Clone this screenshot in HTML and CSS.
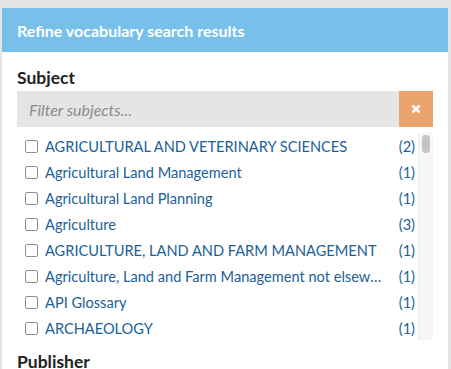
FILE: index.html
```html
<!DOCTYPE html>
<html>
<head>
<meta charset="utf-8">
<link rel="stylesheet" href="styles.css">
</head>
<body>
<div class="panel">
  <div class="panel-header">Refine vocabulary search results</div>
  <div class="panel-body">
    <h3 class="facet-title">Subject</h3>
    <div class="filter">
      <input class="filter-input" type="text" placeholder="Filter subjects...">
      <button class="filter-clear" type="button" aria-label="Clear">
        <svg width="10" height="10" viewBox="0 0 10 10"><path d="M1.5 1.5 L8.5 8.5 M8.5 1.5 L1.5 8.5" stroke="#fff" stroke-width="2.6" stroke-linecap="butt"/></svg>
      </button>
    </div>
    <div class="facet-list">
      <ul class="items">
        <li class="item"><span class="box"></span><span class="name">AGRICULTURAL AND VETERINARY SCIENCES</span><span class="count">(2)</span></li>
        <li class="item"><span class="box"></span><span class="name">Agricultural Land Management</span><span class="count">(1)</span></li>
        <li class="item"><span class="box"></span><span class="name">Agricultural Land Planning</span><span class="count">(1)</span></li>
        <li class="item"><span class="box"></span><span class="name">Agriculture</span><span class="count">(3)</span></li>
        <li class="item"><span class="box"></span><span class="name">AGRICULTURE, LAND AND FARM MANAGEMENT</span><span class="count">(1)</span></li>
        <li class="item"><span class="box"></span><span class="name">Agriculture, Land and Farm Management not elsewhere classified</span><span class="count">(1)</span></li>
        <li class="item"><span class="box"></span><span class="name">API Glossary</span><span class="count">(1)</span></li>
        <li class="item"><span class="box"></span><span class="name">ARCHAEOLOGY</span><span class="count">(1)</span></li>
      </ul>
      <div class="scroll-track"><div class="scroll-thumb"></div></div>
    </div>
    <h3 class="facet-title next">Publisher</h3>
  </div>
</div>
</body>
</html>
```
FILE: styles.css
```css
html, body {
  margin: 0;
  padding: 0;
}
body {
  background: #e5e5e5;
  font-family: Lato, "Noto Sans", sans-serif;
  overflow: hidden;
  height: 369px;
}
.panel {
  margin: 8px 3px 0 2px;
  background: #fff;
  height: 361px;
  overflow: hidden;
}
.panel-header {
  height: 44px;
  background: #77c0e9;
  color: #fff;
  font-weight: 700;
  font-size: 16px;
  display: flex;
  align-items: center;
  padding: 0 15px;
}
.panel-body {
  padding: 16px 15px 0 15px;
}
.facet-title {
  margin: 0 0 3px 0;
  font-size: 17.5px;
  font-weight: 700;
  color: #222;
  line-height: 20px;
}
.facet-title.next {
  margin-top: 12px;
}
.filter {
  display: flex;
  height: 36px;
}
.filter-input {
  flex: 1;
  border: none;
  background: #e5e5e5;
  padding: 0 12px;
  font-family: inherit;
  font-size: 16px;
  font-style: italic;
  color: #333;
  outline: none;
  min-width: 0;
}
.filter-input::placeholder {
  color: #8a8a8a;
}
.filter-clear {
  width: 34px;
  border: none;
  background: #eca46e;
  padding: 0;
  display: flex;
  align-items: center;
  justify-content: center;
}
.facet-list {
  margin-top: 6px;
  height: 207px;
  display: flex;
  overflow: hidden;
}
.items {
  list-style: none;
  margin: 0;
  padding: 0 3px 0 8px;
  flex: 1;
  min-width: 0;
}
.item {
  height: 26px;
  display: flex;
  align-items: center;
  font-size: 14.6px;
  color: #215f98;
}
.box {
  width: 11px;
  height: 11px;
  border: 1px solid #8f8f8f;
  border-radius: 2px;
  flex: none;
  margin-right: 7px;
}
.name {
  flex: 1;
  min-width: 0;
  white-space: nowrap;
  overflow: hidden;
  text-overflow: ellipsis;
  margin-right: 10px;
}
.count {
  flex: none;
}
.scroll-track {
  width: 14px;
  flex: none;
  background: #f6f6f6;
  border-left: 1px solid #ececec;
  display: flex;
  justify-content: center;
  padding-top: 2px;
}
.scroll-thumb {
  width: 8px;
  height: 18px;
  background: #c4c4c4;
  border-radius: 4px;
}
```
